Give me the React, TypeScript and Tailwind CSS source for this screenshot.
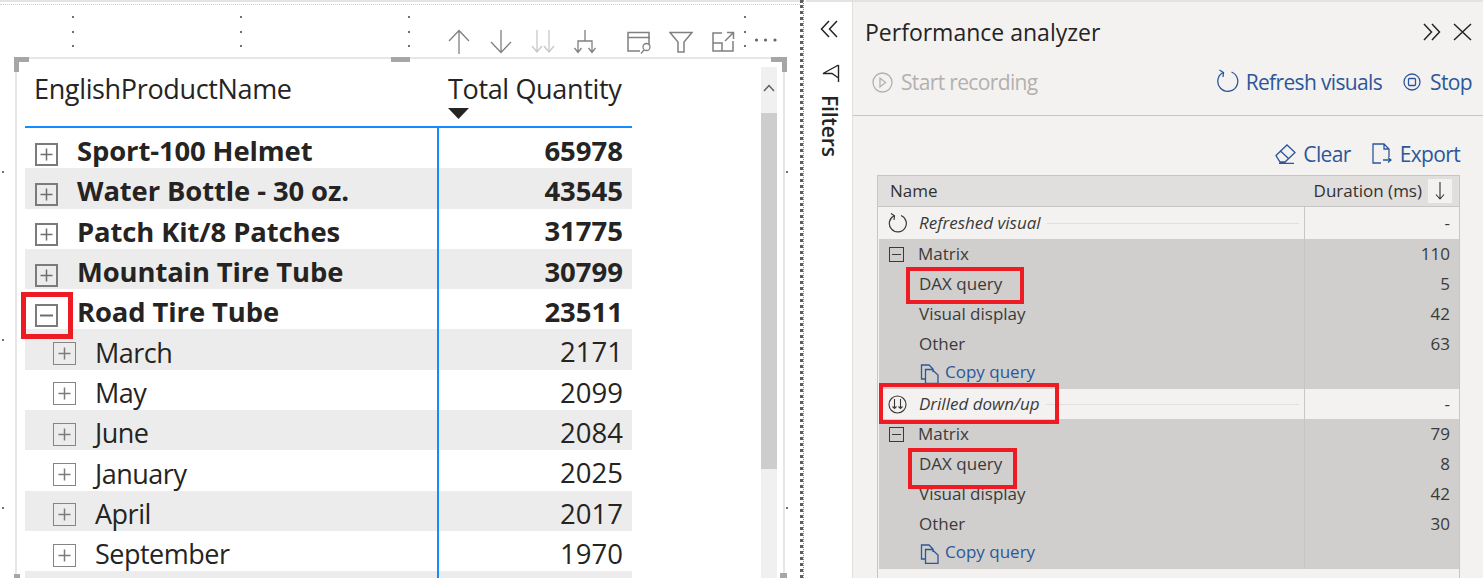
const font = "font-['Open_Sans','Liberation_Sans',sans-serif]";

const matrixRows = [
  { name: "Sport-100 Helmet", value: "65978", bold: true },
  { name: "Water Bottle - 30 oz.", value: "43545", bold: true },
  { name: "Patch Kit/8 Patches", value: "31775", bold: true },
  { name: "Mountain Tire Tube", value: "30799", bold: true },
  { name: "Road Tire Tube", value: "23511", bold: true, open: true },
  { name: "March", value: "2171" },
  { name: "May", value: "2099" },
  { name: "June", value: "2084" },
  { name: "January", value: "2025" },
  { name: "April", value: "2017" },
  { name: "September", value: "1970" },
  { name: "", value: "" },
];

const specks = [
  "left-[72px] top-[16px]", "left-[72px] top-[31px]", "left-[72px] top-[45px]",
  "left-[240px] top-[16px]", "left-[240px] top-[31px]", "left-[240px] top-[45px]",
  "left-[408px] top-[16px]", "left-[408px] top-[31px]", "left-[408px] top-[45px]",
  "left-[744px] top-[16px]", "left-[744px] top-[31px]", "left-[744px] top-[45px]",
  "left-[2px] top-[171px]", "left-[2px] top-[339px]", "left-[2px] top-[507px]",
  "left-[786px] top-[171px]", "left-[786px] top-[507px]",
];

function ToolIcon({ children, stroke = "#808080" }: { children: React.ReactNode; stroke?: string }) {
  return (
    <svg width="24" height="26" viewBox="0 0 24 26" fill="none" stroke={stroke} strokeWidth="1.3">
      {children}
    </svg>
  );
}

function Toolbar() {
  return (
    <div className="flex h-[56px] shrink-0 items-end pb-[2px] pl-[432px]">
      <div className="flex gap-[18px]">
        <ToolIcon><path d="M2 13 12 2.5 22 13M12 2.5V26" /></ToolIcon>
        <ToolIcon><path d="M2 14 12 24.5 22 14M12 2V24.5" /></ToolIcon>
        <ToolIcon stroke="#c8c8c8"><path d="M6 2V24M1 18l5 6 5-6M18 2V24M13 18l5 6 5-6" /></ToolIcon>
        <ToolIcon><path d="M12 2V13M5 24V13H19V24M1.5 20 5 24.5 8.5 20M15.5 20 19 24.5 22.5 20" /></ToolIcon>
      </div>
      <div className="ml-[30px] flex gap-[18px]">
        <ToolIcon>
          <path d="M22 17V4.5H1V23H13M1 9.5H23" strokeWidth="1.5" />
          <circle cx="19.5" cy="19" r="3.5" />
          <path d="M17 22 14 25.5" />
        </ToolIcon>
        <ToolIcon><path d="M1 4.5H23L15 14V24H9V14Z" strokeWidth="1.5" /></ToolIcon>
        <ToolIcon>
          <path d="M11 5H2V23H22V13M2 15H11V23M14 13 22 5M16 4.5H22.5V11" strokeWidth="1.5" />
        </ToolIcon>
        <ToolIcon>
          <g fill="#666" stroke="none">
            <circle cx="3.5" cy="12" r="1.6" />
            <circle cx="12.5" cy="12" r="1.6" />
            <circle cx="22" cy="12" r="1.6" />
          </g>
        </ToolIcon>
      </div>
    </div>
  );
}

function ExpandBox({ open, bold }: { open?: boolean; bold?: boolean }) {
  return (
    <span
      className={`flex size-[23px] shrink-0 items-center justify-center ${
        bold ? "mt-[12px] border-[2.5px] border-[#7b7b7b]" : "mt-[8px] border-[1.5px] border-[#858585]"
      }`}
    >
      <svg width="15" height="15" viewBox="0 0 15 15" stroke={bold ? "#6e6e6e" : "#7b7b7b"} strokeWidth={open ? 2 : 1.5}>
        <path d={open ? "M1 7.5H14" : "M1.5 7.5H13.5M7.5 1.5V13.5"} />
      </svg>
    </span>
  );
}

function MatrixRow({ row, index }: { row: (typeof matrixRows)[number]; index: number }) {
  return (
    <div className={`flex h-[40.3px] shrink-0 text-[#252423] ${index % 2 === 1 ? "bg-[#ececec]" : ""}`}>
      <div className={`flex w-[414px] items-center border-r-2 border-[#118dff] ${row.bold ? "pl-[10px]" : "pl-[28px]"}`}>
        {row.name && <ExpandBox open={row.open} bold={row.bold} />}
        {row.bold ? (
          <span className="ml-[19px] mt-[5px] text-[27.4px] leading-none font-bold whitespace-nowrap tracking-[-0.1px]">{row.name}</span>
        ) : (
          <span className="ml-[19px] mt-[5px] text-[27px] leading-none whitespace-nowrap tracking-[-0.5px]">{row.name}</span>
        )}
      </div>
      <div className={`flex flex-1 items-center justify-end pr-[9px] pt-[5px] text-[27.5px] leading-none ${row.bold ? "font-bold" : ""}`}>
        {row.value}
      </div>
    </div>
  );
}

function Matrix() {
  return (
    <div className="flex min-h-0 w-[607px] shrink-0 flex-col">
      <div className="flex h-[69px] shrink-0 border-b-2 border-[#118dff] text-[27px] leading-none text-[#252423]">
        <div className="w-[414px] pt-[16px] pl-[9px] tracking-[-0.35px] whitespace-nowrap">EnglishProductName</div>
        <div className="pt-[16px] pl-[9px] tracking-[-0.35px] whitespace-nowrap">
          Total Quantity
          <svg className="mt-[6px]" width="21" height="11" viewBox="0 0 21 11" fill="#252423"><path d="M0 0H21L10.5 11Z" /></svg>
        </div>
      </div>
      {matrixRows.map((row, i) => <MatrixRow key={i} row={row} index={i} />)}
    </div>
  );
}

function Scrollbar() {
  return (
    <div className="ml-[129px] mt-[8px] flex w-[16px] flex-col bg-[#f0f0f0]">
      <div className="flex h-[46px] shrink-0 justify-center pt-[17px]">
        <svg width="12" height="8" viewBox="0 0 12 8" fill="none" stroke="#5c5c5c" strokeWidth="1.4"><path d="M1 7 6 1.5 11 7" /></svg>
      </div>
      <div className="h-[356px] shrink-0 bg-[#cdcdcd]" />
    </div>
  );
}

function Canvas() {
  return (
    <div className={`relative flex h-full w-[800px] shrink-0 flex-col pl-[15px] pr-[15px] ${font}`}>
      <div className="absolute left-0 right-0 top-0 h-[2px] bg-[#e3e3e3]" />
      <div className="absolute left-0 right-0 top-[4px] border-t border-dotted border-[#cfcfcf]" />
      {specks.map((s) => (
        <span key={s} className={`absolute size-[2px] bg-[#707070] ${s}`} />
      ))}
      <Toolbar />
      <div className="mt-[1px] flex min-h-0 flex-1 border-x-2 border-t-2 border-[#e6e6e6] pl-[8px]">
        <Matrix />
        <Scrollbar />
      </div>
      {/* resize handles of the selected visual */}
      <span className="absolute left-[14px] top-[57px] h-[15px] w-[15px] border-l-[5px] border-t-[5px] border-[#a6a6a6]" />
      <span className="absolute left-[771px] top-[57px] h-[15px] w-[16px] border-r-[5px] border-t-[5px] border-[#a6a6a6]" />
      <span className="absolute left-[391px] top-[57px] h-[5px] w-[19px] bg-[#a6a6a6]" />
      <span className="absolute left-[14px] top-[574px] h-[4px] w-[6px] bg-[#a6a6a6]" />
      <span className="absolute left-[780px] top-[573px] h-[5px] w-[7px] bg-[#a6a6a6]" />
      {/* annotation */}
      <span className="absolute left-[21px] top-[292px] h-[47px] w-[52px] border-[5px] border-[#ed1c24]" />
    </div>
  );
}

function FiltersPane() {
  return (
    <div className={`flex h-full w-[49px] shrink-0 flex-col items-center border-r border-[#e1dfdd] bg-white pl-[2px] ${font}`}>
      <div className="h-[2px] w-full shrink-0 bg-[#e3e3e3]" />
      <svg className="mt-[18px] shrink-0" width="18" height="18" viewBox="0 0 18 18" fill="none" stroke="#252423" strokeWidth="1.5">
        <path d="M9 1 1.5 9 9 17M17 1 9.5 9 17 17" />
      </svg>
      <svg className="mt-[26px] ml-[4px] shrink-0" width="18" height="19" viewBox="0 0 18 19" fill="none" stroke="#252423" strokeWidth="1.4">
        <path d="M16.5 1V18V14L10 9.5H1L16.5 1" />
      </svg>
      <div className="mt-[12px] [writing-mode:vertical-rl] text-[21px] leading-none font-semibold tracking-[-0.1px] text-[#252423]">
        Filters
      </div>
    </div>
  );
}

const blue = "#2b579a";

function CopyIcon() {
  return (
    <svg width="20" height="20" viewBox="0 0 20 20" fill="none" stroke={blue} strokeWidth="1.3">
      <path d="M5 15H1.5V1H9L13 5V8M5.5 5.5H12L18 11V19.5H5.5Z" />
    </svg>
  );
}

function TraceRow({ label, value, children }: { label?: string; value: string; children?: React.ReactNode }) {
  return (
    <div className="flex h-[30px] shrink-0">
      <div className="ml-[1px] flex w-[426px] items-center border-r border-[#c8c6c4] bg-[#d0cfcd] pl-[40px]">
        {children}
        {label}
      </div>
      <div className="flex flex-1 items-center justify-end bg-[#d0cfcd] pr-[9px] text-[#3b3a39]">{value}</div>
    </div>
  );
}

function MinusBox() {
  return (
    <span className="mr-[14px] flex size-[15px] items-center justify-center border border-[#3b3a39]">
      <span className="h-px w-[9px] bg-[#3b3a39]" />
    </span>
  );
}

function Group({ rows }: { rows: string[][] }) {
  return (
    <div className="text-[#3b3a39]">
      {rows.map(([label, value], i) => (
        <TraceRow key={label} label={i === 0 ? undefined : label} value={value}>
          {i === 0 && (
            <span className="-ml-[30px] flex items-center">
              <MinusBox />
              {label}
            </span>
          )}
        </TraceRow>
      ))}
      <div className="flex h-[30px] shrink-0">
        <div className="ml-[1px] flex w-[426px] items-center border-r border-[#c8c6c4] bg-[#d0cfcd] pl-[41px] text-[#2b579a]">
          <span className="mr-[5px] shrink-0"><CopyIcon /></span>
          <span className="-mt-[4px]">Copy query</span>
        </div>
        <div className="flex-1 bg-[#d0cfcd]" />
      </div>
    </div>
  );
}

function EventRow({ label, icon, h }: { label: string; icon: React.ReactNode; h: string }) {
  return (
    <div className={`flex shrink-0 text-[#3b3a39] ${h}`}>
      <div className="flex w-[427px] items-center border-r border-[#c8c6c4] pl-[10px]">
        <span className="mr-[12px] flex w-[19px] shrink-0 justify-center">{icon}</span>
        <span className="italic whitespace-nowrap">{label}</span>
        <span className="ml-[6px] mr-[5px] h-px flex-1 bg-[#e1dfdd]" />
      </div>
      <div className="flex flex-1 items-center justify-end pr-[9px]">-</div>
    </div>
  );
}

function PerformancePane() {
  return (
    <div className={`flex h-full min-w-0 flex-1 flex-col bg-[#f3f2f1] ${font}`}>
      <div className="h-[2px] shrink-0 bg-[#e3e3e3]" />
      <div className="flex h-[60px] shrink-0 items-center pl-[12px] pr-[11px]">
        <span className="flex-1 text-[23px] font-medium text-[#252423]">Performance analyzer</span>
        <svg width="18" height="18" viewBox="0 0 18 18" fill="none" stroke="#252423" strokeWidth="1.5">
          <path d="M1 1 8.5 9 1 17M9 1 16.5 9 9 17" />
        </svg>
        <svg className="ml-[12px]" width="19" height="18" viewBox="0 0 19 18" fill="none" stroke="#252423" strokeWidth="1.5">
          <path d="M1 1 18 17M18 1 1 17" />
        </svg>
      </div>
      <div className="flex h-[54px] shrink-0 items-start border-b border-[#c8c6c4] pl-[19px] pr-[11px] pt-[9px] text-[21px] leading-[22px] tracking-[-0.65px]">
        <div className="flex flex-1 items-center text-[#b3b0ad]">
          <svg width="21" height="21" viewBox="0 0 21 21" fill="none" stroke="#b3b0ad" strokeWidth="1.3">
            <circle cx="10.5" cy="10.5" r="9.5" /><path d="M8 6V15L13.5 10.5Z" />
          </svg>
          <span className="ml-[8px]">Start recording</span>
        </div>
        <div className="flex items-center text-[#2b579a]">
          <svg className="-mt-[3px]" width="23" height="23" viewBox="0 0 23 23" fill="none" stroke={blue} strokeWidth="1.3">
            <path d="M15.5 3A10 10 0 1 1 7 3.5M3.5 1 7.5 3.5 7 8" />
          </svg>
          <span className="ml-[7px]">Refresh visuals</span>
          <svg className="ml-[21px]" width="18" height="18" viewBox="0 0 18 18" fill="none" stroke={blue} strokeWidth="1.3">
            <circle cx="9" cy="9" r="8" /><rect x="5.5" y="5.5" width="7" height="7" rx="1" />
          </svg>
          <span className="ml-[9px]">Stop</span>
        </div>
      </div>
      <div className="flex h-[59px] shrink-0 items-center justify-end gap-[21px] pr-[23px] pt-[16px] text-[21px] leading-[22px] tracking-[-0.65px] text-[#2b579a]">
        <span className="flex items-center gap-[7px]">
          <svg width="21" height="21" viewBox="0 0 21 21" fill="none" stroke={blue} strokeWidth="1.3">
            <path d="M1 12.5 12 2 20 9.5 10 19H5ZM5 7.5 14 16M4 20.5H19" />
          </svg>
          <span>Clear</span>
        </span>
        <span className="flex items-center gap-[8px]">
          <svg width="20" height="21" viewBox="0 0 20 21" fill="none" stroke={blue} strokeWidth="1.3">
            <path d="M9 20H1V1H12L17 6V14M12 1V6H17M11 17H19M16 14.5 19 17 16 19.5" />
          </svg>
          <span>Export</span>
        </span>
      </div>
      <div className="ml-[24px] flex min-h-0 w-[583px] flex-1 flex-col border-x border-[#c8c6c4] text-[17px]">
        <div className="flex h-[32px] shrink-0 items-center border-y border-[#c8c6c4] bg-[#e1dfdd] pl-[12px] pr-[7px] text-[#323130]">
          <span className="flex-1">Name</span>
          <span className="mr-[6px]">Duration (ms)</span>
          <span className="flex h-[24px] w-[24px] items-center justify-center bg-[#f3f2f1]">
            <svg width="10" height="18" viewBox="0 0 10 18" fill="none" stroke="#323130" strokeWidth="1.1"><path d="M5 0V17M1 12.5 5 17 9 12.5" /></svg>
          </span>
        </div>
        <EventRow
          label="Refreshed visual"
          h="h-[32px]"
          icon={
            <svg width="19" height="20" viewBox="0 0 19 20" fill="none" stroke="#3b3a39" strokeWidth="1.2">
              <path d="M13 2.5A8.5 8.5 0 1 1 6 2.8M3 .5 6.5 2.8 6 7" />
            </svg>
          }
        />
        <Group rows={[["Matrix", "110"], ["DAX query", "5"], ["Visual display", "42"], ["Other", "63"]]} />
        <EventRow
          label="Drilled down/up"
          h="h-[30px]"
          icon={
            <svg width="19" height="19" viewBox="0 0 19 19" fill="none" stroke="#3b3a39" strokeWidth="1.1">
              <circle cx="9.5" cy="9.5" r="8.5" /><path d="M6.5 4V13.5M4.5 11.5 6.5 13.5 8.5 11.5M12.5 4V13.5M10.5 11.5 12.5 13.5 14.5 11.5" />
            </svg>
          }
        />
        <Group rows={[["Matrix", "79"], ["DAX query", "8"], ["Visual display", "42"], ["Other", "30"]]} />
      </div>
      {/* annotations */}
      <span className="absolute left-[906px] top-[267px] h-[37px] w-[118px] border-[4px] border-[#ed1c24]" />
      <span className="absolute left-[879px] top-[383px] h-[41px] w-[180px] border-[4px] border-[#ed1c24]" />
      <span className="absolute left-[908px] top-[448px] h-[41px] w-[109px] border-[4px] border-[#ed1c24]" />
    </div>
  );
}

export default function App() {
  return (
    <div className="relative flex h-[578px] w-[1483px] overflow-hidden bg-white">
      <Canvas />
      <div className="h-full w-[4px] shrink-0 border-l-[3px] border-r border-dotted border-l-[#5f5f5f] border-r-[#8a8a8a]" />
      <FiltersPane />
      <PerformancePane />
    </div>
  );
}
